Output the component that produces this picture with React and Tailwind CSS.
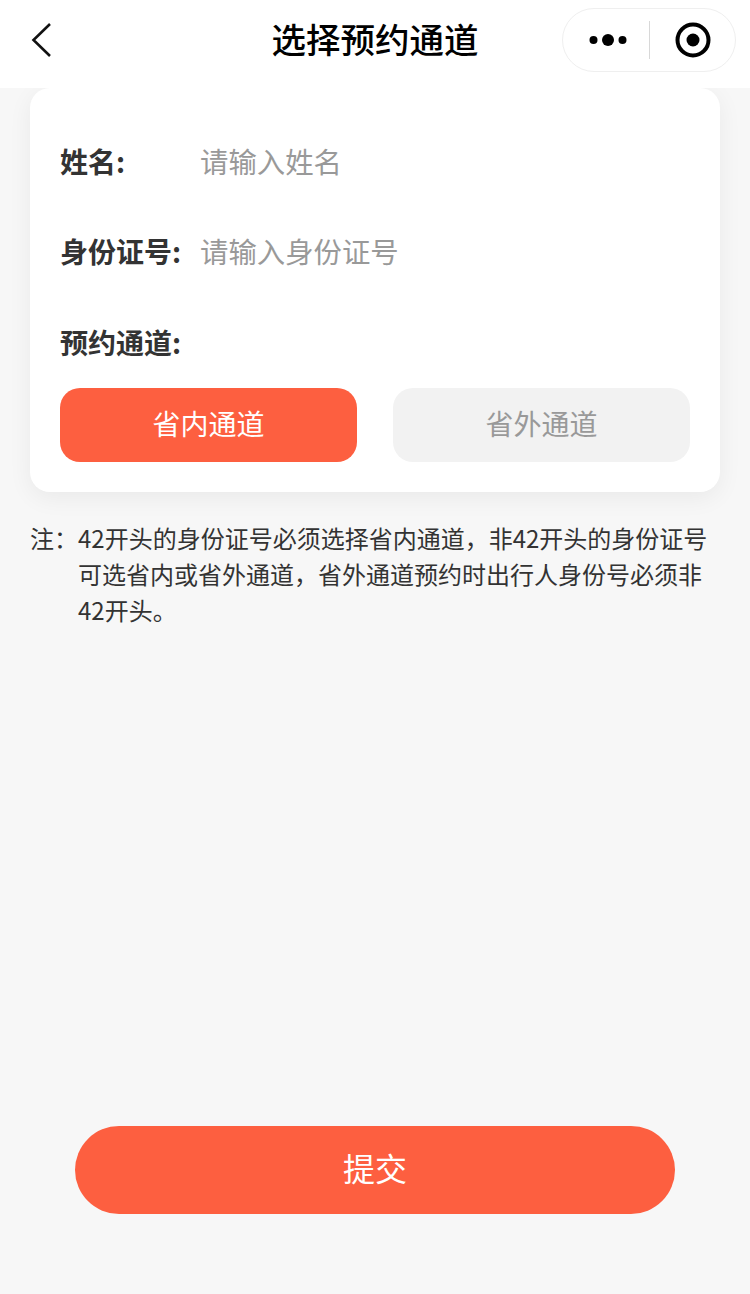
const CJK = "font-['Noto_Sans_CJK_SC','Noto_Sans',sans-serif]";

function NavCapsule() {
  return (
    <div className="flex h-[64px] w-[174px] items-center rounded-full border border-[#efefef] bg-white">
      <div className="flex flex-1 justify-center pl-[4px]">
        <svg width="40" height="14" viewBox="0 0 40 14" fill="#000">
          <circle cx="5.5" cy="7" r="4" />
          <circle cx="20" cy="7" r="6" />
          <circle cx="34.5" cy="7" r="4" />
        </svg>
      </div>
      <div className="h-[38px] w-px bg-[#d8d8d8]" />
      <div className="flex w-[85px] justify-center">
        <svg width="36" height="36" viewBox="0 0 36 36">
          <circle cx="18" cy="18" r="15.5" fill="none" stroke="#000" strokeWidth="4" />
          <circle cx="18" cy="18" r="6.5" fill="#000" />
        </svg>
      </div>
    </div>
  );
}

function Field({ label, placeholder }) {
  return (
    <div className="flex h-[90px] items-center pb-[4px]">
      <span className="w-[140px] text-[28px] font-bold text-[#333]">{label}</span>
      <span className="text-[28.4px] text-[#999]">{placeholder}</span>
    </div>
  );
}

const NOTE = "42开头的身份证号必须选择省内通道\uFF0C非42开头的身份证号可选省内或省外通道\uFF0C省外通道预约时出行人身份号必须非42开头。";

export default function App() {
  return (
    <div className={`flex h-[1294px] w-[750px] flex-col bg-[#f7f7f7] ${CJK}`}>
      <header className="relative flex h-[88px] shrink-0 items-center justify-between bg-white pb-[8px] pl-[30px] pr-[14px]">
        <svg width="24" height="36" viewBox="0 0 24 36" fill="none" stroke="#111" strokeWidth="2.6">
          <path d="M20 2 L3.5 18 L20 34" />
        </svg>
        <h1 className="absolute left-0 right-0 top-[15px] text-center text-[34.5px] leading-[46px] font-medium text-black">
          选择预约通道
        </h1>
        <NavCapsule />
      </header>

      <section className="mx-[30px] h-[404px] rounded-[20px] bg-white px-[30px] pt-[30px] shadow-[0_6px_24px_rgba(0,0,0,0.06)]">
        <Field label="姓名:" placeholder="请输入姓名" />
        <Field label="身份证号:" placeholder="请输入身份证号" />
        <div className="flex h-[90px] items-center pb-[2px] text-[28px] font-bold text-[#333]">预约通道:</div>
        <div className="flex justify-between">
          <button className="h-[74px] w-[297px] rounded-[20px] bg-[#fd5f40] pb-[4px] text-[28px] text-white">省内通道</button>
          <button className="h-[74px] w-[297px] rounded-[20px] bg-[#f2f2f2] pb-[4px] text-[28px] text-[#999]">省外通道</button>
        </div>
      </section>

      <div className="mt-[28px] flex pl-[30px] pr-[36px] text-[24px] leading-[36px] text-[#333]">
        <span className="w-[48px] shrink-0">{"注\uFF1A"}</span>
        <p>{NOTE}</p>
      </div>

      <div className="mt-auto mb-[80px] flex justify-center">
        <button className="h-[88px] w-[600px] rounded-full bg-[#fd5f40] pb-[6px] text-[32px] text-white">提交</button>
      </div>
    </div>
  );
}
